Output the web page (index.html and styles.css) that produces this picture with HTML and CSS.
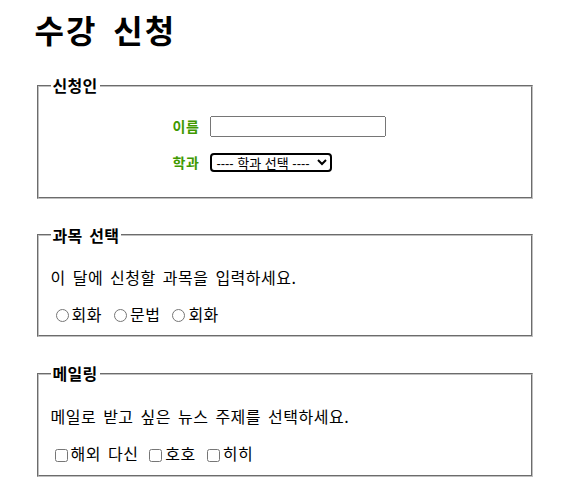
FILE: index.html
```html
<!DOCTYPE html>
<html lang="ko">
<head>
<meta charset="utf-8">
<title>수강 신청</title>
<link rel="stylesheet" href="styles.css">
</head>
<body>
<div class="page">
  <h1 class="title">수강 신청</h1>

  <fieldset class="box">
    <legend class="box-legend">신청인</legend>
    <div class="form-grid">
      <label class="field-label" for="name">이름</label>
      <input class="text-input" type="text" id="name">
      <label class="field-label" for="dept">학과</label>
      <select class="dept-select" id="dept">
        <option>---- 학과 선택 ----</option>
      </select>
    </div>
  </fieldset>

  <fieldset class="box">
    <legend class="box-legend">과목 선택</legend>
    <p class="desc">이 달에 신청할 과목을 입력하세요.</p>
    <div class="choices">
      <label class="choice"><input class="radio" type="radio" name="subject">회화</label>
      <label class="choice"><input class="radio" type="radio" name="subject">문법</label>
      <label class="choice"><input class="radio" type="radio" name="subject">회화</label>
    </div>
  </fieldset>

  <fieldset class="box">
    <legend class="box-legend">메일링</legend>
    <p class="desc">메일로 받고 싶은 뉴스 주제를 선택하세요.</p>
    <div class="choices">
      <label class="choice"><input class="check" type="checkbox">해외 다신</label>
      <label class="choice"><input class="check" type="checkbox">호호</label>
      <label class="choice"><input class="check" type="checkbox">히히</label>
    </div>
  </fieldset>
</div>
</body>
</html>
```

FILE: styles.css
```css
html, body {
  margin: 0;
  padding: 0;
  background: #fff;
}

body {
  font-family: "Noto Sans CJK KR", "Noto Sans", sans-serif;
  font-size: 16px;
  line-height: 21px;
  color: #000;
  letter-spacing: 0.5px;
  word-spacing: 2px;
}

.page {
  width: 500px;
  margin: 0 auto;
  padding-top: 8px;
}

.title {
  font-size: 32px;
  line-height: 42px;
  font-weight: bold;
  letter-spacing: 2px;
  word-spacing: 5px;
  margin: 0 0 25px;
}

.box {
  margin: 0 2px 26px;
  padding: 5.6px 12px 10px;
  border: 2px groove rgb(192, 192, 192);
}

.box-legend {
  font-weight: bold;
  font-size: 16px;
  line-height: 21px;
  letter-spacing: 0.3px;
  padding: 0 2px;
}

.form-grid {
  display: grid;
  grid-template-columns: auto auto;
  justify-content: center;
  align-items: center;
  column-gap: 11px;
  row-gap: 16px;
  padding: 14px 10px 15px 0;
}

.field-label {
  color: rgb(64, 153, 0);
  font-weight: bold;
  font-size: 14px;
  line-height: 18px;
  text-align: right;
}

.text-input {
  box-sizing: border-box;
  width: 176px;
  height: 21px;
  margin: 0;
  font-family: "Noto Sans CJK KR", sans-serif;
  font-size: 13.33px;
}

.dept-select {
  box-sizing: border-box;
  width: 122px;
  height: 19px;
  margin: 0;
  padding: 0;
  border: 2px solid #000;
  border-radius: 4px;
  background-color: #fff;
  color: #000;
  font-family: "Liberation Sans", "Noto Sans CJK KR", sans-serif;
  font-size: 13px;
  letter-spacing: 0;
  word-spacing: 0;
  line-height: 15px;
}

.desc {
  margin: 16px 0;
}

.choice {
  margin-right: 0;
}

.radio {
  margin: 3px 3px 0 5px;
  vertical-align: -1px;
}

.check {
  margin: 3px 3px 3px 4px;
  vertical-align: -2px;
}
```
